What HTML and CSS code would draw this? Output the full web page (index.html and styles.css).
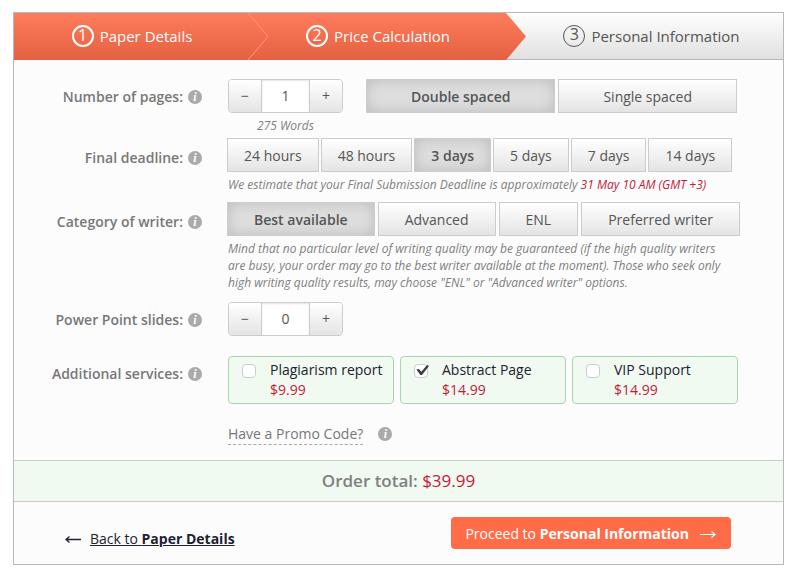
FILE: index.html
```
<!DOCTYPE html>
<html lang="en">
<head>
  <meta charset="UTF-8">
  <title>Order – Price Calculation</title>
  <meta name="viewport" content="width=device-width, initial-scale=1.0">
  <link rel="stylesheet" href="styles.css">
</head>
<body>

  <form class="order" id="order-form">

    <ol class="steps">
      <li class="step done">
        <span class="num">1</span> Paper Details
        <svg class="chevron" viewBox="0 0 20 47" preserveAspectRatio="none">
          <path d="M0 0L20 23.5L0 47" fill="none" stroke="#ff9a80" stroke-width="1"/>
        </svg>
      </li>
      <li class="step done">
        <span class="num">2</span> Price Calculation
        <svg class="chevron" viewBox="0 0 20 47" preserveAspectRatio="none">
          <defs>
            <linearGradient id="orange" x1="0" y1="0" x2="0" y2="1">
              <stop offset="0" stop-color="#ff7d5c"/>
              <stop offset="1" stop-color="#e36142"/>
            </linearGradient>
          </defs>
          <path d="M0 0L20 23.5L0 47Z" fill="url(#orange)"/>
        </svg>
      </li>
      <li class="step next">
        <span class="num">3</span> Personal Information
      </li>
    </ol>

    <div class="fields">
      <div class="row">
        <label class="name" for="pages">Number of pages: <span class="info">i</span></label>
        <div class="value">
          <div class="pages">
            <div>
              <div class="stepper">
                <button type="button" data-step="-1" aria-label="Fewer pages">−</button>
                <input type="text" id="pages" value="1">
                <button type="button" data-step="1" aria-label="More pages">+</button>
              </div>
              <p class="note words">275 Words</p>
            </div>
            <div class="choices wide">
              <button type="button" class="choice selected">Double spaced</button>
              <button type="button" class="choice">Single spaced</button>
            </div>
          </div>
        </div>
      </div>

      <div class="row deadline">
        <div class="name">Final deadline: <span class="info">i</span></div>
        <div class="value">
          <div class="choices tight">
            <button type="button" class="choice">24 hours</button>
            <button type="button" class="choice">48 hours</button>
            <button type="button" class="choice selected">3 days</button>
            <button type="button" class="choice">5 days</button>
            <button type="button" class="choice">7 days</button>
            <button type="button" class="choice">14 days</button>
          </div>
          <p class="note">We estimate that your Final Submission Deadline is approximately <span class="date">31 May 10 AM (GMT +3)</span></p>
        </div>
      </div>

      <div class="row writer">
        <div class="name">Category of writer: <span class="info">i</span></div>
        <div class="value">
          <div class="choices">
            <button type="button" class="choice selected">Best available</button>
            <button type="button" class="choice">Advanced</button>
            <button type="button" class="choice">ENL</button>
            <button type="button" class="choice">Preferred writer</button>
          </div>
          <p class="note">Mind that no particular level of writing quality may be guaranteed (if the high quality writers are busy, your order may go to the best writer available at the moment). Those who seek only high writing quality results, may choose "ENL" or "Advanced writer" options.</p>
        </div>
      </div>

      <div class="row slides">
        <label class="name" for="slides">Power Point slides: <span class="info">i</span></label>
        <div class="value">
          <div class="stepper">
            <button type="button" data-step="-1" aria-label="Fewer slides">−</button>
            <input type="text" id="slides" value="0">
            <button type="button" data-step="1" aria-label="More slides">+</button>
          </div>
        </div>
      </div>

      <div class="row services">
        <div class="name">Additional services: <span class="info">i</span></div>
        <div class="value cards">
          <label class="card">
            <input type="checkbox">
            <span>Plagiarism report<br><span class="price">$9.99</span></span>
          </label>
          <label class="card">
            <input type="checkbox" checked>
            <span>Abstract Page<br><span class="price">$14.99</span></span>
          </label>
          <label class="card">
            <input type="checkbox">
            <span>VIP Support<br><span class="price">$14.99</span></span>
          </label>
        </div>
      </div>

      <div class="row promo-row">
        <div class="value promo">
          <a href="#promo">Have a Promo Code?</a>
          <span class="info">i</span>
        </div>
      </div>
    </div>

    <div class="total">Order total: <span class="price">$39.99</span></div>

    <div class="actions">
      <div class="back">
        <svg width="16" height="10" viewBox="0 0 16 10" fill="none" stroke="#1c2230">
          <path d="M1 5.5H16M4.500 2.500L1 5.500L4.500 8.500" stroke-width="1.300"/>
        </svg>
        <a href="#paper">Back to <b>Paper Details</b></a>
      </div>
      <button type="submit" class="proceed">
        <span>Proceed to <b>Personal Information</b></span>
        <svg width="16" height="10" viewBox="0 0 16 10" fill="none" stroke="#fff">
          <path d="M0 5.500H15M11.500 2.500L15 5.500L11.500 8.500" stroke-width="1.200"/>
        </svg>
      </button>
    </div>

  </form>

  <script>
    // One selected button per group
    document.querySelectorAll(".choices").forEach(function (group) {
      group.addEventListener("click", function (e) {
        if (!e.target.classList.contains("choice")) return;
        group.querySelector(".selected").classList.remove("selected");
        e.target.classList.add("selected");
      });
    });

    // Plus / minus buttons
    document.querySelectorAll(".stepper button").forEach(function (btn) {
      btn.addEventListener("click", function () {
        const input = btn.parentNode.querySelector("input");
        input.value = Math.max(0, Number(input.value) + Number(btn.dataset.step));
      });
    });

    document.getElementById("order-form").addEventListener("submit", function (e) {
      e.preventDefault();
    });
  </script>

</body>
</html>
```
FILE: styles.css
```
* {
  box-sizing: border-box;
}

body {
  margin: 12px 9px 12px 13px;
  background: #fff;
  color: #555;
  font-family: "Open Sans", sans-serif;
  font-size: 14px;
  line-height: 20px;
}

button, input {
  font: inherit;
  color: inherit;
}

button {
  cursor: pointer;
}

p {
  margin: 0;
}

.order {
  border: 1px solid #b9b9b9;
  background: #fcfcfc;
}

/* Steps */
.steps {
  display: grid;
  grid-template-columns: 234fr 258fr 277fr;
  margin: 0;
  padding: 0;
  list-style: none;
  font-size: 15px;
}

.step {
  position: relative;
  display: flex;
  align-items: center;
  justify-content: center;
  gap: 6px;
  height: 47px;
  padding-bottom: 1px;
}

.step.done {
  padding-left: 2px;
  background: linear-gradient(#ff7d5c, #e36142);
  color: #fff;
}

.step.next {
  padding-left: 14px;
  border-bottom: 1px solid #b9b9b9;
  background: linear-gradient(#fff, #e0e0e0);
}

.num {
  width: 22px;
  height: 22px;
  border: 2px solid #fff;
  border-radius: 50%;
  font-size: 16px;
  line-height: 17px;
  text-align: center;
}

.next .num {
  border: 1px solid #555;
}

.chevron {
  position: absolute;
  top: 0;
  left: 100%;
  z-index: 1;
  width: 20px;
  height: 100%;
}

/* Fields */
.fields {
  padding: 19px 42px 15px 0;
}

.row {
  display: grid;
  grid-template-columns: 188px 1fr;
  column-gap: 26px;
}

.name {
  display: flex;
  align-items: center;
  align-self: start;
  justify-content: flex-end;
  gap: 5px;
  padding-top: 8px;
  color: #777;
  font-weight: 600;
}

.info {
  width: 14px;
  height: 14px;
  border-radius: 50%;
  background: #aaa;
  color: #fff;
  font: italic bold 12px/14px "Liberation Serif", serif;
  text-align: center;
}

.deadline {
  margin-top: 4px;
}

.writer {
  margin-top: 9px;
}

.slides {
  margin-top: 11px;
}

.services {
  margin-top: 20px;
}

.deadline .name,
.writer .name {
  padding-top: 10px;
}

.deadline .choices,
.writer .choices {
  margin-left: -1px;
}

.pages {
  display: flex;
  gap: 23px;
}

.note {
  max-width: 500px;
  margin-top: 4px;
  color: #808080;
  font-size: 12px;
  font-style: italic;
  line-height: 17px;
}

.words {
  text-align: center;
}

.date {
  color: #c41a3b;
}

.stepper {
  display: flex;
  width: 115px;
  height: 34px;
  border: 1px solid #ccc;
  border-radius: 4px;
  overflow: hidden;
}

.stepper button {
  width: 32px;
  padding: 0;
  border: 0;
  background: linear-gradient(#fff, #e4e4e4);
}

.stepper input {
  flex: 1;
  min-width: 0;
  padding: 0;
  border: 1px solid #ccc;
  border-width: 0 1px;
  background: #fff;
  box-shadow: inset 0 1px 2px #e4e4e4;
  text-align: center;
}

.choices {
  display: flex;
  gap: 3px;
}

.choices.tight {
  gap: 2px;
}

.choice {
  height: 34px;
  padding: 2px 26px 0;
  border: 1px solid #ccc;
  background: linear-gradient(#fff, #e4e4e4);
  white-space: nowrap;
}

.tight .choice {
  padding: 2px 16px 0;
}

.wide .choice {
  padding: 2px 44px 0;
}

.choice.selected {
  background: #dedede;
  box-shadow: inset 0 0 14px #bcbcbc;
  font-weight: 600;
}

/* Additional services */
.cards {
  display: flex;
  gap: 6px;
  max-width: 510px;
}

.card {
  display: flex;
  flex: 1;
  align-items: flex-start;
  gap: 14px;
  padding: 3px 0 3px 13px;
  border: 1px solid #a8d5ad;
  border-radius: 4px;
  background: #f0faf1;
  color: #1c2230;
  white-space: nowrap;
}

.card input {
  appearance: none;
  width: 14px;
  height: 14px;
  margin: 4px 0 0;
  border: 1px solid #ccc;
  border-radius: 4px;
  background: #fff;
}

.card input:checked::before {
  content: "";
  display: block;
  width: 14px;
  height: 11px;
  background: #3c3c44;
  clip-path: polygon(10% 42%, 28% 36%, 45% 62%, 86% 0, 100% 10%, 50% 92%, 38% 92%);
}

.price {
  color: #c41a3b;
}

/* Promo code */
.promo-row {
  margin-top: 20px;
}

.promo {
  display: flex;
  grid-column: 2;
  align-items: flex-start;
  gap: 15px;
}

.promo a {
  border-bottom: 1px dashed #aaa;
  color: #777;
  text-decoration: none;
}

.promo .info {
  margin-top: 3px;
}

/* Total */
.total {
  padding: 10px 0;
  border: 1px solid #ccc;
  border-width: 1px 0;
  background: #f0faf1;
  color: #808080;
  font-size: 17px;
  font-weight: 600;
  text-align: center;
}

.total .price {
  font-weight: 400;
}

/* Bottom buttons */
.actions {
  display: flex;
  align-items: flex-end;
  justify-content: space-between;
  padding: 15px 52px 15px 51px;
}

.back {
  display: flex;
  align-items: center;
  gap: 9px;
}

.back a {
  color: #1c2230;
}

.proceed {
  display: flex;
  align-items: center;
  gap: 11px;
  height: 32px;
  padding: 2px 15px 0 14px;
  border: 0;
  border-radius: 4px;
  background: #ff6c47;
  color: #fff;
}
```
